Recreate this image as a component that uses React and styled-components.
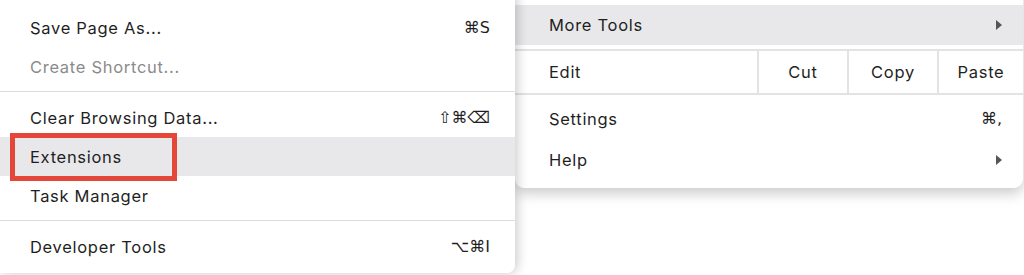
import React from "react";
import styled, { createGlobalStyle } from "styled-components";

const Global = createGlobalStyle`
  html, body {
    margin: 0;
    padding: 0;
    background: #ffffff;
    overflow: hidden;
  }
  body {
    font-family: Inter, "Liberation Sans", "DejaVu Sans", sans-serif;
    -webkit-font-smoothing: antialiased;
  }
`;

const leftItems = [
  { label: "Save Page As...", keys: "⌘S" },
  { label: "Create Shortcut...", disabled: true },
  { separator: true },
  { label: "Clear Browsing Data...", keys: "⇧⌘⌫" },
  { label: "Extensions", hover: true, marked: true },
  { label: "Task Manager" },
  { separator: true },
  { label: "Developer Tools", keys: "⌥⌘I" },
];

const App = () => {
  return (
    <>
      <Global />
      <Stage>
        <SubMenu>
          {leftItems.map((item, i) =>
            item.separator ? (
              <Separator key={i} />
            ) : (
              <Item key={i} $hover={item.hover} $disabled={item.disabled}>
                <span>{item.label}</span>
                {item.keys && <Keys>{item.keys}</Keys>}
                {item.marked && <Marker />}
              </Item>
            )
          )}
        </SubMenu>
        <MainMenu>
          <MainItem $hover>
            <span>More Tools</span>
            <Arrow />
          </MainItem>
          <EditRow>
            <EditLabel>Edit</EditLabel>
            <EditButton $w={90}>Cut</EditButton>
            <EditButton $w={90}>Copy</EditButton>
            <EditButton $w={86}>Paste</EditButton>
          </EditRow>
          <MainItem $top={3}>
            <span>Settings</span>
            <Keys>⌘,</Keys>
          </MainItem>
          <MainItem>
            <span>Help</span>
            <Arrow />
          </MainItem>
        </MainMenu>
      </Stage>
    </>
  );
};

export default App;

const Stage = styled.div`
  display: flex;
  align-items: flex-start;
  width: 1024px;
  height: 275px;
  color: #1f1f1f;
  font-size: 16.5px;
  letter-spacing: 0.7px;
`;

const SubMenu = styled.div`
  position: relative;
  z-index: 2;
  width: 515px;
  flex: none;
  margin-top: -8px;
  padding: 16px 0 4px;
  box-sizing: border-box;
  height: 281px;
  background: #ffffff;
  border-radius: 0 8px 8px 0;
  box-shadow: 2px 0 12px rgba(0, 0, 0, 0.22);
  display: flex;
  flex-direction: column;
`;

const Item = styled.div`
  position: relative;
  height: 39px;
  display: flex;
  align-items: center;
  justify-content: space-between;
  padding: 0 25px 0 30px;
  background: ${(p) => (p.$hover ? "#e8e8eb" : "transparent")};
  color: ${(p) => (p.$disabled ? "#8b8b8b" : "inherit")};
`;

const Keys = styled.span`
  font-family: "DejaVu Sans", sans-serif;
  font-size: 16px;
  letter-spacing: 0;
`;

const Separator = styled.div`
  height: 1px;
  margin: 5px 0 6px;
  background: #dcdcdc;
`;

const Marker = styled.div`
  position: absolute;
  left: 10px;
  top: -4px;
  width: 167px;
  height: 48px;
  box-sizing: border-box;
  border: 5px solid #e5463a;
`;

const MainMenu = styled.div`
  width: 508px;
  flex: none;
  margin-top: -10px;
  padding: 15px 0 8px;
  background: #ffffff;
  border-radius: 0 0 9px 9px;
  box-shadow: 0 5px 14px rgba(0, 0, 0, 0.22);
  display: flex;
  flex-direction: column;
`;

const MainItem = styled.div`
  height: ${(p) => (p.$hover ? 40 : 41)}px;
  margin-top: ${(p) => p.$top || 0}px;
  margin-bottom: ${(p) => (p.$hover ? 4 : 0)}px;
  display: flex;
  align-items: center;
  justify-content: space-between;
  padding: 0 21px 0 34px;
  background: ${(p) => (p.$hover ? "#e8e8eb" : "transparent")};
`;

const Arrow = styled.span`
  width: 0;
  height: 0;
  border-top: 5px solid transparent;
  border-bottom: 5px solid transparent;
  border-left: 6px solid #555555;
`;

const EditRow = styled.div`
  display: flex;
  height: 42px;
  border-top: 2px solid #e3e3e3;
  border-bottom: 2px solid #e3e3e3;
`;

const EditLabel = styled.div`
  flex: 1;
  display: flex;
  align-items: center;
  padding-left: 34px;
`;

const EditButton = styled.div`
  width: ${(p) => p.$w}px;
  box-sizing: border-box;
  display: flex;
  align-items: center;
  justify-content: center;
  border-left: 2px solid #e3e3e3;
`;
